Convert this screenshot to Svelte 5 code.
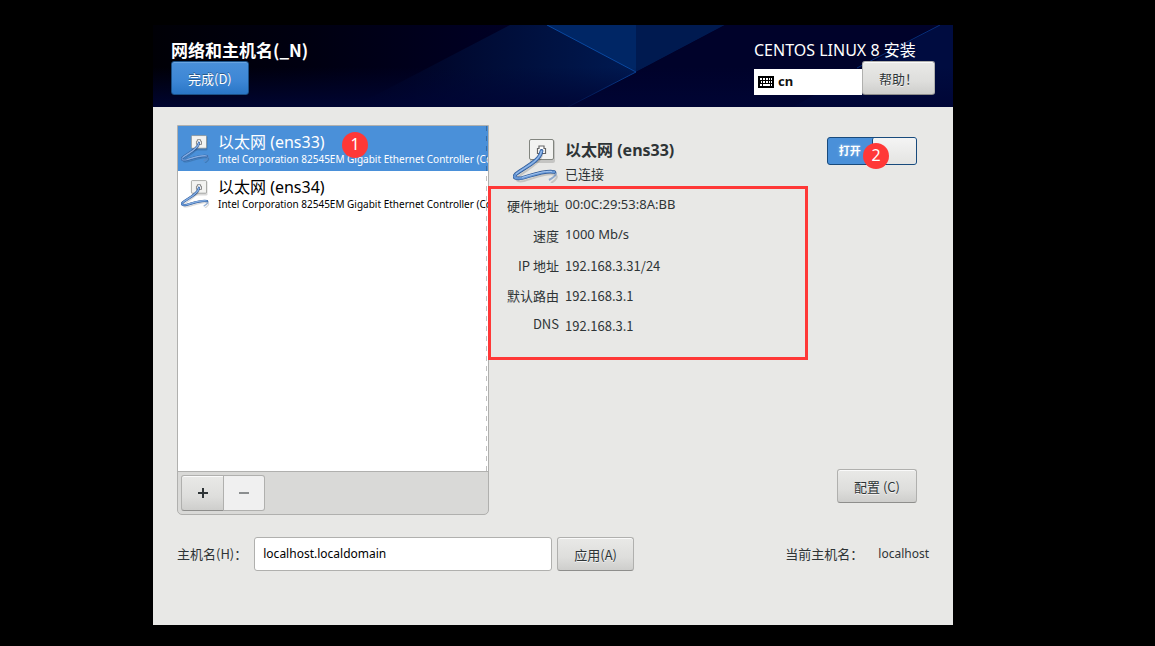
<script>
  const connections = [
    { id: "ens33", name: "以太网 (ens33)" },
    { id: "ens34", name: "以太网 (ens34)" }
  ];
  const adapter = "Intel Corporation 82545EM Gigabit Ethernet Controller (Copper)";

  const details = [
    { label: "硬件地址", value: "00:0C:29:53:8A:BB", latin: true },
    { label: "速度", value: "1000 Mb/s", latin: true },
    { label: "IP 地址", value: "192.168.3.31/24" },
    { label: "默认路由", value: "192.168.3.1" },
    { label: "DNS", value: "192.168.3.1", latinLabel: true }
  ];

  let selected = $state("ens33");
  let enabled = $state(true);
  let hostname = $state("localhost.localdomain");
</script>

{#snippet wiredIcon()}
  <svg class="wired" viewBox="0 0 46 46" aria-hidden="true">
    <rect x="17" y="3" width="25" height="23" rx="2" fill="#000" opacity=".15" />
    <rect x="16.500" y="2.500" width="24" height="20" rx="1.500" fill="#f3f3f1" stroke="#82857f" />
    <path d="M24.500 16.500v-5H26V9h5v2.500h1.500v5z" fill="#fff" stroke="#666" stroke-width="1.200" />
    <path d="M28.500 14C27 25 12 31 4 38c-4 4 1 5 6 4 11-3 24-9 31-6 4 1 1 5-4 8" fill="none" stroke="#000" stroke-width="2" opacity=".15" transform="translate(1 2)" />
    <path d="M39 34.500c7 0 4 5-3 8.500" fill="none" stroke="#5f87bd" stroke-width="2" opacity=".65" />
    <path d="M28.500 14C27 24 12 30 3 37c-4 4 1 5 6 4 11-3 24-8 32-6" fill="none" stroke="#2c5591" stroke-width="3.800" stroke-linecap="round" />
    <path d="M28.500 14C27 24 12 30 3 37c-4 4 1 5 6 4 11-3 24-8 32-6" fill="none" stroke="#6697d6" stroke-width="2.400" stroke-linecap="round" />
    <path d="M28.500 14C27 24 12 30 3 37M9 40.500c11-3 22-7 30-6" fill="none" stroke="#a9c7ee" stroke-width=".9" />
  </svg>
{/snippet}

<div class="window">
  <header>
    <svg class="backdrop" viewBox="0 0 800 82" preserveAspectRatio="none" aria-hidden="true">
      <defs>
        <linearGradient id="base">
          <stop offset="0" stop-color="#000006" />
          <stop offset=".2" stop-color="#000011" />
          <stop offset=".4" stop-color="#000022" />
          <stop offset="1" stop-color="#00053a" />
        </linearGradient>
        <linearGradient id="beam">
          <stop offset="0" stop-color="#000a30" stop-opacity="0" />
          <stop offset=".5" stop-color="#000d38" />
          <stop offset="1" stop-color="#001a52" />
        </linearGradient>
        <linearGradient id="floor" x1="0" y1="0" x2="0" y2="1">
          <stop offset="0" stop-color="#000535" stop-opacity="0" />
          <stop offset="1" stop-color="#000535" stop-opacity=".9" />
        </linearGradient>
      </defs>
      <rect width="800" height="82" fill="url(#base)" />
      <path d="M357 0h126v47L415 82H200z" fill="url(#beam)" />
      <path d="M394 0h89v47z" fill="#002665" />
      <path d="M483 0h89l-89 47z" fill="#001a50" />
      <path d="M483 47 572 0h215L640 82H415z" fill="#00022a" />
      <path d="M787 0h13v82H640z" fill="#000c40" />
      <path d="M394 0l89 47-68 35" fill="none" stroke="#0a49a0" />
      <path d="M787 0 704 43" stroke="#062f7a" />
      <rect y="42" width="800" height="40" fill="url(#floor)" />
    </svg>
    <div class="title">
      <h1>网络和主机名(_N)</h1>
      <button class="primary">完成(D)</button>
    </div>
    <div class="product">
      <p>CENTOS LINUX 8 安装</p>
      <div class="tools">
        <div class="layout">
          <svg width="16" height="12" viewBox="0 0 16 12" shape-rendering="crispEdges" aria-hidden="true">
            <rect width="16" height="12" />
            <path d="M2 3h2M5 3h2M8 3h2M11 3h1M13 3h1M3 6h1M5 6h2M8 6h2M11 6h1M13 6h1M2 9h2M5 9h7M13 9h1" stroke="#fff" stroke-width="2" />
          </svg>
          <span>cn</span>
        </div>
        <button>帮助！</button>
      </div>
    </div>
  </header>

  <main>
    <div class="network">
      <div class="sidebar">
        <div class="list">
          {#each connections as item}
            <button class="item" class:selected={selected === item.id} onclick={() => (selected = item.id)}>
              {@render wiredIcon()}
              <span class="text">
                <span class="name">{item.name}</span>
                <span class="adapter">{adapter}</span>
              </span>
            </button>
          {/each}
        </div>
        <div class="toolbar">
          <button class="add" aria-label="添加">
            <svg width="12" height="12" viewBox="0 0 12 12"><path d="M1 6h10M6 1v10" stroke="#2e3436" stroke-width="2" /></svg>
          </button>
          <button class="remove" aria-label="删除" disabled>
            <svg width="12" height="12" viewBox="0 0 12 12"><path d="M1 6h10" stroke="#8b8e8f" stroke-width="2" /></svg>
          </button>
        </div>
        <span class="badge one">1</span>
      </div>

      <section class="device">
        <div class="summary">
          {@render wiredIcon()}
          <div class="heading">
            <h2>以太网 (ens33)</h2>
            <p>已连接</p>
          </div>
          <label class="switch">
            <input type="checkbox" role="switch" aria-label="打开" bind:checked={enabled} />
            <span class="on">打开</span>
            <span class="knob"></span>
          </label>
        </div>
        <table>
          <tbody>
            {#each details as row}
              <tr>
                <th scope="row" class:raised={row.latinLabel}>{row.label}</th>
                <td class:raised={row.latin} class:latin={row.latin}>{row.value}</td>
              </tr>
            {/each}
          </tbody>
        </table>
        <button class="configure">配置 (C)</button>
        <div class="highlight"></div>
        <span class="badge two">2</span>
      </section>
    </div>

    <form class="host" onsubmit={(e) => e.preventDefault()}>
      <label for="hostname">主机名(H)：</label>
      <input id="hostname" type="text" bind:value={hostname} />
      <button>应用(A)</button>
      <span class="current">当前主机名：</span>
      <span class="value">localhost</span>
    </form>
  </main>
</div>

<style>
  :global(body) {
    margin: 0;
    background: #000;
  }

  .window {
    display: flex;
    flex-direction: column;
    box-sizing: border-box;
    min-height: calc(100vh - 46px);
    margin: 25px 202px 0 153px;
    background: #e8e8e6;
    color: #2e3436;
    font: 13px/20px "Noto Sans CJK SC", sans-serif;
  }

  h1,
  h2,
  p {
    margin: 0;
  }

  button {
    box-sizing: border-box;
    height: 34px;
    padding: 2px 16px 0;
    border: 1px solid #b0b0ae;
    border-bottom-color: #8e8e8c;
    border-radius: 3px;
    background: linear-gradient(#e9e9e7, #dededc 60%, #cececc);
    box-shadow: inset 0 1px #fafafa;
    color: #2e3436;
    font: inherit;
    text-shadow: 0 1px #f4f4f4;
    white-space: nowrap;
  }

  .primary {
    border-color: #1c5187;
    background: linear-gradient(#4a90d9, #3c86d5 60%, #2a76c6);
    box-shadow: inset 0 1px #6aa5e1;
    color: #fff;
    text-shadow: 0 -1px #2a5a8c;
  }

  header {
    position: relative;
    display: flex;
    justify-content: space-between;
    padding: 14px 18px 12px;
    color: #fff;
  }

  .backdrop {
    position: absolute;
    inset: 0;
    width: 100%;
    height: 100%;
  }

  .title,
  .product {
    position: relative;
  }

  .product {
    width: 181px;
  }

  h1,
  .product p {
    line-height: 22px;
    white-space: nowrap;
  }

  h1 {
    font-size: 17px;
  }

  .product p {
    font-family: "Noto Sans", "Noto Sans CJK SC", sans-serif;
    font-size: 16px;
  }

  .tools {
    display: flex;
    align-items: flex-end;
  }

  .layout {
    display: flex;
    flex: 1;
    align-items: center;
    gap: 4px;
    height: 26px;
    padding-left: 4px;
    background: #fff;
    color: #111;
    font: bold 13px/20px "Noto Sans", sans-serif;
  }

  .layout span {
    padding-bottom: 2px;
  }

  main {
    padding: 18px 24px;
  }

  .network {
    display: flex;
    min-height: 390px;
  }

  .sidebar {
    position: relative;
    display: flex;
    flex-direction: column;
    box-sizing: border-box;
    width: 312px;
    border: 1px solid #b0b0ae;
    border-radius: 0 0 5px 5px;
    background: #d9d9d7;
  }

  .list {
    position: relative;
    flex: 1;
    background: #fff;
  }

  .list::after {
    content: "";
    position: absolute;
    inset: 0 1px 0 auto;
    width: 1px;
    background: repeating-linear-gradient(rgba(0, 0, 0, 0.25) 0 5px, transparent 5px 10px);
  }

  .item {
    display: flex;
    align-items: center;
    gap: 8px;
    width: 100%;
    height: 45px;
    padding: 0 0 0 3px;
    border: 0;
    border-radius: 0;
    overflow: hidden;
    background: none;
    box-shadow: none;
    color: #000;
    text-align: left;
    text-shadow: none;
  }

  .item.selected {
    background: #4a90d9;
    color: #fff;
  }

  .wired {
    flex: none;
    width: 46px;
    height: 46px;
  }

  .item .wired {
    width: 29px;
    height: 29px;
  }

  .name,
  .adapter {
    display: block;
  }

  .name {
    font: 16px/20px "Noto Sans", "Noto Sans CJK SC", sans-serif;
  }

  .adapter {
    font: 10px/14px "Noto Sans", sans-serif;
  }

  .toolbar {
    display: flex;
    padding: 3px;
    border-top: 1px solid #b0b0ae;
  }

  .toolbar button {
    width: 43px;
    height: 36px;
    padding: 0;
  }

  .toolbar svg {
    display: block;
    margin: 0 auto;
  }

  .add {
    border-radius: 3px 0 0 3px;
  }

  .toolbar .remove {
    width: 41px;
    border-color: #b0b0ae;
    border-left: 0;
    border-radius: 0 3px 3px 0;
    background: #f0f0f0;
    box-shadow: none;
  }

  .badge {
    position: absolute;
    width: 26px;
    height: 26px;
    border-radius: 50%;
    background: #ff3837;
    color: #fff;
    font: 16px/24px "Noto Sans", sans-serif;
    text-align: center;
  }

  .one {
    top: 6px;
    left: 164px;
  }

  .two {
    top: 18px;
    right: 40px;
  }

  .device {
    position: relative;
    display: flex;
    flex: 1;
    flex-direction: column;
    padding: 12px 12px 12px 0;
  }

  .summary {
    display: flex;
    align-items: flex-start;
    gap: 6px;
    padding-left: 24px;
  }

  .heading {
    flex: 1;
  }

  h2 {
    font: bold 16px/26px "Noto Sans", "Noto Sans CJK SC", sans-serif;
  }

  .heading p {
    line-height: 22px;
  }

  .switch {
    position: relative;
    display: flex;
    box-sizing: border-box;
    width: 90px;
    height: 28px;
    border: 1px solid #184a7c;
    border-radius: 3px;
    background: #4a90d9;
    color: #fff;
    font-size: 11px;
    font-weight: bold;
    line-height: 25px;
    text-align: center;
    text-shadow: 0 0 3px #8fbbe8;
  }

  .switch input {
    position: absolute;
    inset: 0;
    margin: 0;
    opacity: 0;
  }

  .on,
  .knob {
    flex: 1;
  }

  .knob {
    border-left: 1px solid #184a7c;
    border-radius: 2px;
    background: linear-gradient(#f4f4f4, #e4e4e2);
  }

  table {
    align-self: flex-start;
    margin-top: 6px;
    margin-left: 12px;
    border-collapse: collapse;
  }

  th,
  td {
    height: 25px;
    padding: 5px 0 0 6px;
    font-weight: normal;
    vertical-align: top;
  }

  th {
    text-align: right;
  }

  .raised {
    line-height: 16px;
  }

  .latin {
    font-family: "Noto Sans", sans-serif;
  }

  .configure {
    align-self: flex-end;
    margin-top: auto;
  }

  .highlight {
    position: absolute;
    top: 61px;
    right: 121px;
    left: -1px;
    height: 168px;
    border: 3px solid #ff3837;
    pointer-events: none;
  }

  .host {
    display: flex;
    align-items: center;
    gap: 5px;
    margin-top: 22px;
  }

  .host label {
    margin-right: 2px;
  }

  .host input,
  .value {
    font: 12px/20px "Noto Sans", sans-serif;
  }

  .host input {
    box-sizing: border-box;
    width: 298px;
    height: 34px;
    padding: 0 8px 2px;
    border: 1px solid #b0b0ae;
    border-radius: 3px;
    background: #fff;
    color: #000;
  }

  .current {
    margin-right: 10px;
    margin-left: auto;
  }
</style>
